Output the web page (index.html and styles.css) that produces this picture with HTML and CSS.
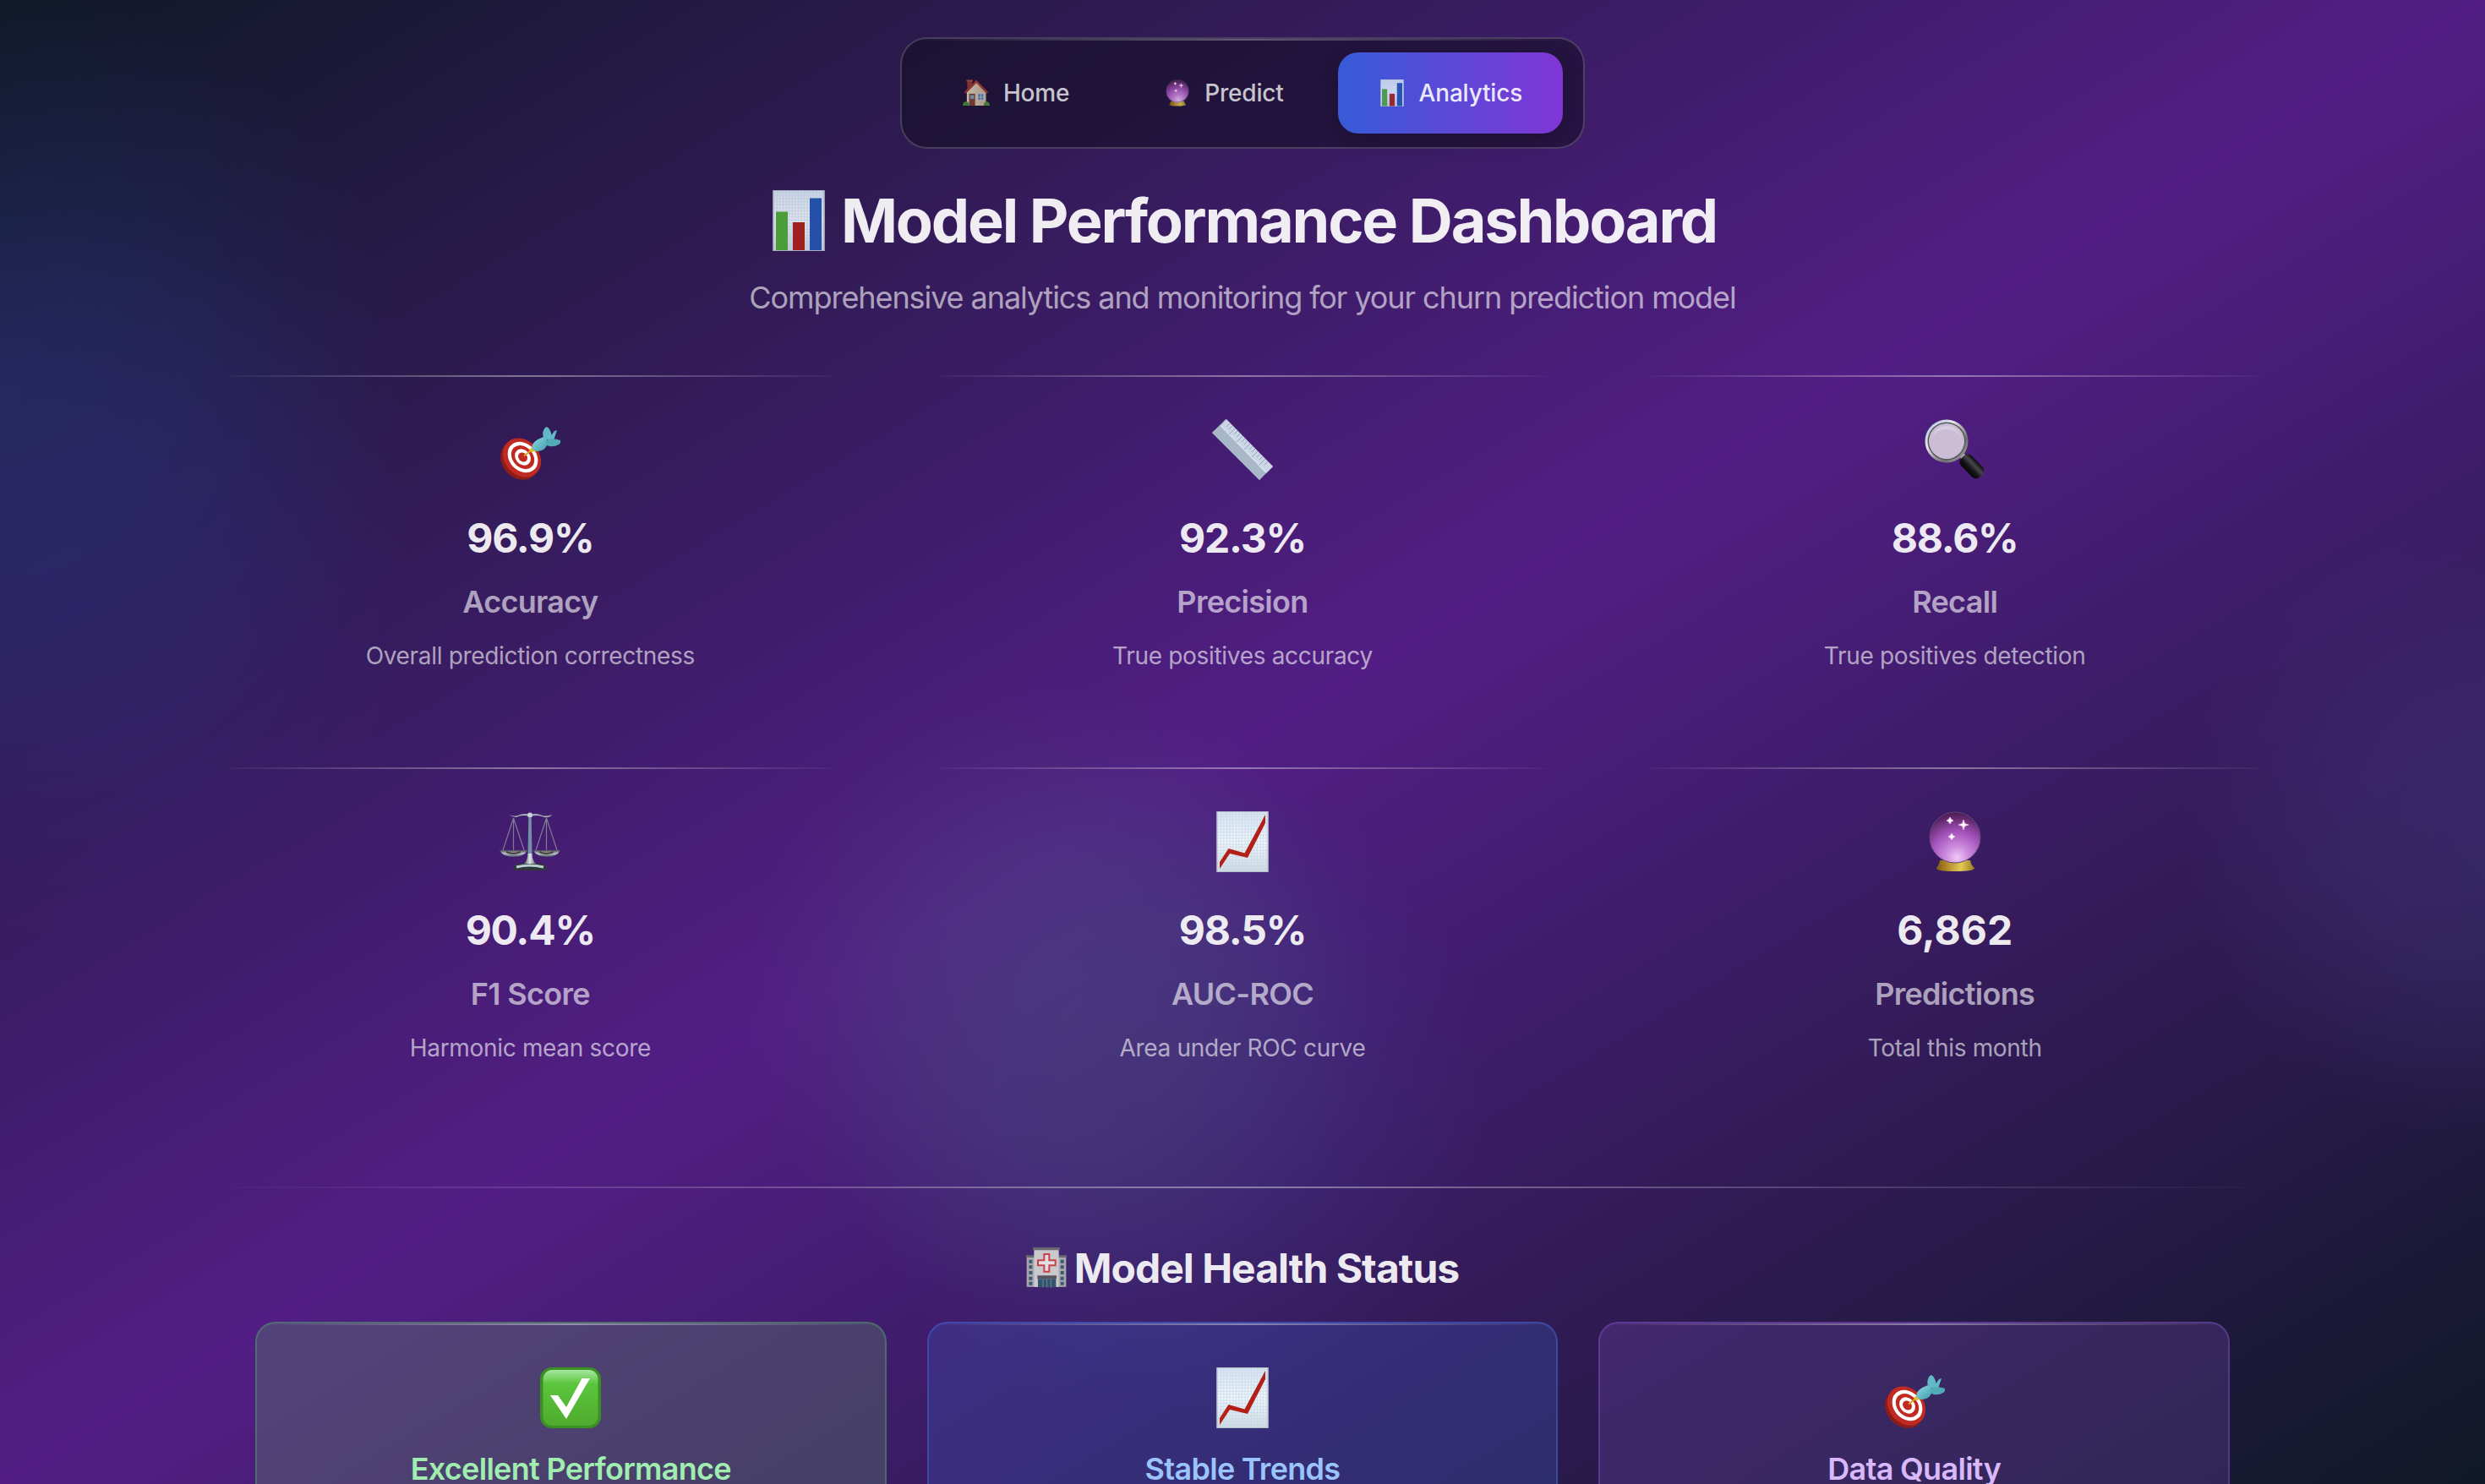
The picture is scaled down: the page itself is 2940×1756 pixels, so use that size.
FILE: index.html
```html
<!DOCTYPE html>
<html lang="en">
<head>
<meta charset="utf-8">
<title>Model Performance Dashboard</title>
<link rel="stylesheet" href="styles.css">
</head>
<body>
<svg class="sprite" aria-hidden="true">
  <defs>
    <linearGradient id="paper" x1="0" y1="0" x2="0" y2="1"><stop offset="0" stop-color="#dde2ee"/><stop offset=".5" stop-color="#f6f6f7"/><stop offset="1" stop-color="#d3d8dd"/></linearGradient>
    <linearGradient id="green" x1="0" y1="0" x2="0" y2="1"><stop offset="0" stop-color="#a5e8a0"/><stop offset=".25" stop-color="#5bc53d"/><stop offset="1" stop-color="#4fab2e"/></linearGradient>
    <linearGradient id="gold" x1="0" y1="0" x2="1" y2="0"><stop offset="0" stop-color="#7c5a13"/><stop offset=".3" stop-color="#b88b2b"/><stop offset=".65" stop-color="#e0cb55"/><stop offset="1" stop-color="#9a7a1e"/></linearGradient>
    <radialGradient id="orb" cx=".54" cy=".9" r=".9"><stop offset="0" stop-color="#f0c8f4"/><stop offset=".25" stop-color="#cd8cdf"/><stop offset=".58" stop-color="#a352bb"/><stop offset="1" stop-color="#4a1a4f"/></radialGradient>
    <linearGradient id="rim" x1="0" y1="0" x2="1" y2="1"><stop offset="0" stop-color="#9fc4ea"/><stop offset=".35" stop-color="#e6e6e6"/><stop offset=".7" stop-color="#6e6e70"/><stop offset="1" stop-color="#b5b5b0"/></linearGradient>
    <linearGradient id="grip" x1="0" y1="1" x2="0" y2="0"><stop offset="0" stop-color="#050505"/><stop offset=".35" stop-color="#151517"/><stop offset=".68" stop-color="#48484c"/><stop offset="1" stop-color="#0a0a0a"/></linearGradient>
    <linearGradient id="steel" x1="0" y1="0" x2="1" y2="0"><stop offset="0" stop-color="#4a5055"/><stop offset=".5" stop-color="#dfe8ea"/><stop offset="1" stop-color="#4f565c"/></linearGradient>
    <linearGradient id="pan" x1="0" y1="0" x2="0" y2="1"><stop offset="0" stop-color="#4b4b50"/><stop offset=".5" stop-color="#b9c6d0"/><stop offset="1" stop-color="#46505a"/></linearGradient>
    <linearGradient id="dart" x1="0" y1="0" x2="1" y2="1"><stop offset="0" stop-color="#8fdbe2"/><stop offset="1" stop-color="#3f9aab"/></linearGradient>
    <linearGradient id="wall" x1="0" y1="0" x2="1" y2="0"><stop offset="0" stop-color="#e2d3b8"/><stop offset="1" stop-color="#c3b398"/></linearGradient>
    <pattern id="grid" width="3.6" height="3.6" patternUnits="userSpaceOnUse"><path d="M3 0V3.6M0 3H3.6" stroke="#bcd8ee" stroke-width=".7" fill="none"/></pattern>
  </defs>
  <symbol id="i-target" viewBox="0 0 72 72">
    <ellipse cx="24" cy="48.500" rx="21" ry="25" transform="rotate(-42 24 48.500)" fill="#8e1c18"/>
    <ellipse cx="26.500" cy="45.500" rx="20.500" ry="25" transform="rotate(-42 26.500 45.500)" fill="#c02a22"/>
    <ellipse cx="27.500" cy="45" rx="16" ry="20" transform="rotate(-42 27.500 45)" fill="#fff"/>
    <ellipse cx="27.500" cy="45" rx="12" ry="15.500" transform="rotate(-42 27.500 45)" fill="#c02a22"/>
    <ellipse cx="27.500" cy="45" rx="8.500" ry="10.500" transform="rotate(-42 27.500 45)" fill="#fff"/>
    <ellipse cx="27.500" cy="45" rx="5" ry="6" transform="rotate(-42 27.500 45)" fill="#c02a22"/>
    <path d="M29 43.500l9-7" stroke="#d9a520" stroke-width="2"/><path d="M35 36l4-3 4 5-5 1z" fill="#e6c21f"/>
    <path d="M38 34q0-8 14-13l6 5q-3 12-13 12-5 0-7-4z" fill="url(#dart)"/>
    <path d="M53 24q-4-8 1-14 3-2 5 2 4 6 2 12zM57 25l8-11 3-1-4 12z" fill="#62b8c5"/>
    <path d="M54 26q8-5 18-1 1 3-2 5-7 4-14 1z" fill="#52aab8"/>
  </symbol>
  <symbol id="i-ruler" viewBox="0 0 72 72">
    <path d="M16 0L72 56 56 72 0 16z" fill="#93a3b9"/><path d="M10 8l7-8 55 56-8 8z" fill="#cbd7e6"/><path d="M0 16l10-9 54 56-8 9z" fill="#a9b8c9"/>
    <path d="M10 7.500L64 63" stroke="#dfe8f1" stroke-width="1.200"/>
    <path d="M21 5l-4 4m7-1l-4 4m7-1l-7 7m10-4l-4 4m7-1l-4 4m7-1l-7 7m10-4l-4 4m7-1l-4 4m7-1l-7 7m10-4l-4 4m7-1l-4 4m7-1l-7 7m10-4l-4 4m7-1l-4 4m7-1l-7 7m10-4l-4 4" stroke="#8494ac" stroke-width=".8"/>
  </symbol>
  <symbol id="i-search" viewBox="0 0 72 72">
    <path d="M41 44l5-4 6 6-5 5z" fill="#a5a5a5"/>
    <circle cx="26" cy="26" r="25.500" fill="url(#rim)"/><circle cx="26" cy="26" r="22.500" fill="#59595c"/><circle cx="26" cy="26" r="21" fill="#cbbdd6"/>
    <path d="M9 22q4-14 17-14t17 14q-5-10-17-10T9 22z" fill="#d8cce0"/>
    <rect x="40.500" y="47" width="31" height="17" rx="6" transform="rotate(46 55.500 55.500)" fill="url(#grip)"/>
  </symbol>
  <symbol id="i-scales" viewBox="0 0 72 72">
    <path d="M11 4q7 3 13 0 6-2 12 0 6-2 12 0 6 3 14 0-3 4-9 3-5-2-9-2-4 0-8 1-4-1-8-1t-8 2q-5 0-9-3z" fill="#a7b0b8"/>
    <circle cx="36" cy="4.500" r="3" fill="#c9d2d8"/>
    <path d="M16.500 8L4 46m12.500-38v38m0-38L29 46M55.500 8L43 46m12.500-38v38m0-38L68 46" stroke="#7f7b90" stroke-width="1.200" fill="none"/>
    <path d="M34.300 7h3.400l.8 45H33.500z" fill="#7390a6"/><path d="M33.500 50h5q0 9 5 12h-15q5-3 5-12z" fill="url(#steel)"/>
    <path d="M0 46h33q-4 8-16.500 8T0 46zM39.500 46H72q-4 8-16 8t-16.500-8z" fill="url(#pan)"/>
    <path d="M8 48q8 4 17 0M47 48q8 4 17 0" stroke="#4b403c" stroke-width="2" fill="none"/>
    <path d="M21 62h30l5 5q0 3-3 3H19q-3 0-3-3z" fill="#30363b"/><path d="M20 66q15-4 32 0" stroke="#b8d0cf" stroke-width="3" fill="none"/>
  </symbol>
  <symbol id="i-trend" viewBox="0 0 72 72">
    <path d="M5.500 0h61v72h-61z" fill="url(#paper)"/><path d="M5.500 0h61v72h-61z" fill="url(#grid)"/><path d="M6 .5h60v71H6z" stroke="#b4bcc8" fill="none"/>
    <path d="M9 60l10.500-16 19 5.500L63 4v10L42 55l-21-5L9 68z" fill="#b32018"/>
  </symbol>
  <symbol id="i-bars" viewBox="0 0 72 72">
    <path d="M5.500 0h61v72h-61z" fill="url(#paper)"/><path d="M5.500 0h61v72h-61z" fill="url(#grid)"/><path d="M6 .5h60v71H6z" stroke="#b4bcc8" fill="none"/>
    <path d="M9 25.500h14V71H9z" fill="#50a83a"/><path d="M29 38h14v33H29z" fill="#a8221c"/><path d="M49 9.500h14V71H49z" fill="#2355b0"/>
  </symbol>
  <symbol id="i-orb" viewBox="0 0 72 72">
    <path d="M18 58h36q1 6 5 9 0 4-23 4t-22-4q3-3 4-9z" fill="url(#gold)"/>
    <circle cx="36" cy="31" r="30" fill="url(#orb)" stroke="#5f4b78" stroke-width="1"/>
    <path d="M30 7l1.500 2.500L34 11l-2.500 1.500L30 15l-1.500-2.500L26 11l2.500-1.500zM46 10l1.500 4.500L52 16l-4.500 1.500L46 22l-1.500-4.500L40 16l4.500-1.500zM32 26l1.500 2.500L36 30l-2.500 1.500L32 34l-1.500-2.500L28 30l2.500-1.500z" fill="#fff" stroke="#f0b8ea" stroke-width=".8"/>
  </symbol>
  <symbol id="i-home" viewBox="0 0 72 72">
    <path d="M12 3h13v26H12z" fill="#93392c"/><path d="M10 1h17v5H10z" fill="#a64a3a"/>
    <path d="M11 33L37 8l25 26v36H11z" fill="url(#wall)"/><path d="M36 1l32 33-4 4L36 9 8 38l-4-4z" fill="#a0392d"/>
    <path d="M17 38h16v32H17z" fill="#7c4234"/><path d="M20 42h10v10H20z" fill="#7da2bd"/>
    <path d="M38 36h20v20H38z" fill="#c9c4c0"/><path d="M41 39h6v7h-6zM49 39h6v7h-6zM41 48h6v6h-6zM49 48h6v6h-6z" fill="#4d83bd"/>
    <path d="M0 70q0-11 9-11t8 11zM56 70q0-11 8-11t8 11z" fill="#4b8a35"/>
  </symbol>
  <symbol id="i-hospital" viewBox="0 0 72 72">
    <path d="M1 16h70v54H1z" fill="#a7a7ac"/><path d="M0 14h72v4H0z" fill="#69696f"/>
    <path d="M14 2h44v68H14z" fill="#c9c8cd"/><path d="M12 0h48v5H12z" fill="#68686e"/>
    <path d="M5 22h6v6H5zm0 10h6v6H5zm0 10h6v6H5zm0 10h6v6H5zm0 9h6v6H5zM61 22h6v6h-6zm0 10h6v6h-6zm0 10h6v6h-6zm0 10h6v6h-6zm0 9h6v6h-6z" fill="#3c5a76"/>
    <path d="M32 12h9v11h11v9H41v11h-9V32H21v-9h11z" fill="#e0dde3" stroke="#c9404a" stroke-width="3"/>
    <path d="M20 50h34v6H20z" fill="#55555b"/><path d="M21 56h32v15H21z" fill="#34536c"/><path d="M30 56v15M37 56v15M44 56v15" stroke="#6f8799" stroke-width="1.500"/>
  </symbol>
  <symbol id="i-check" viewBox="0 0 72 72">
    <rect width="72" height="72" rx="14" fill="#3c8f23"/><rect x="3.500" y="3" width="65" height="66" rx="11" fill="url(#green)"/>
    <path d="M12 33h9l10 14L49.500 13h9.500L31 61z" fill="#fff"/>
  </symbol>
</svg>

<div class="page">
  <nav class="nav">
    <a class="tab"><svg class="tab-icon"><use href="#i-home"/></svg><span>Home</span></a>
    <a class="tab"><svg class="tab-icon"><use href="#i-orb"/></svg><span>Predict</span></a>
    <a class="tab active"><svg class="tab-icon"><use href="#i-bars"/></svg><span>Analytics</span></a>
  </nav>

  <header class="header">
    <h1 class="title"><svg class="title-icon"><use href="#i-bars"/></svg><span>Model Performance Dashboard</span></h1>
    <p class="subtitle">Comprehensive analytics and monitoring for your churn prediction model</p>
  </header>

  <section class="metrics">
    <article class="metric"><svg class="icon"><use href="#i-target"/></svg><span class="value percent">96.9%</span><span class="label">Accuracy</span><span class="desc">Overall prediction correctness</span></article>
    <article class="metric"><svg class="icon"><use href="#i-ruler"/></svg><span class="value percent">92.3%</span><span class="label">Precision</span><span class="desc">True positives accuracy</span></article>
    <article class="metric"><svg class="icon"><use href="#i-search"/></svg><span class="value percent">88.6%</span><span class="label">Recall</span><span class="desc">True positives detection</span></article>
    <article class="metric"><svg class="icon"><use href="#i-scales"/></svg><span class="value percent">90.4%</span><span class="label">F1 Score</span><span class="desc">Harmonic mean score</span></article>
    <article class="metric"><svg class="icon"><use href="#i-trend"/></svg><span class="value percent">98.5%</span><span class="label">AUC-ROC</span><span class="desc">Area under ROC curve</span></article>
    <article class="metric"><svg class="icon"><use href="#i-orb"/></svg><span class="value">6,862</span><span class="label">Predictions</span><span class="desc">Total this month</span></article>
  </section>

  <section class="health">
    <h2 class="health-title"><svg class="health-icon"><use href="#i-hospital"/></svg><span>Model Health Status</span></h2>
    <div class="statuses">
      <article class="status good"><svg class="icon"><use href="#i-check"/></svg><span class="status-name">Excellent Performance</span></article>
      <article class="status stable"><svg class="icon"><use href="#i-trend"/></svg><span class="status-name">Stable Trends</span></article>
      <article class="status quality"><svg class="icon"><use href="#i-target"/></svg><span class="status-name">Data Quality</span></article>
    </div>
  </section>
</div>
</body>
</html>
```
FILE: styles.css
```css
* { box-sizing: border-box; }

html { height: 100%; overflow: hidden; }

body {
  margin: 0;
  height: 100vh;
  overflow: hidden;
  color: rgba(255, 255, 255, .92);
  font-family: Inter, "Liberation Sans", sans-serif;
  background:
    radial-gradient(circle at 1250px 1180px, rgba(76, 98, 118, .26) 0, rgba(76, 98, 118, .2) 170px, rgba(72, 96, 120, 0) 370px),
    radial-gradient(circle at 1370px 1280px, rgba(62, 74, 150, .24) 0, rgba(62, 74, 150, .2) 190px, rgba(62, 74, 150, 0) 390px),
    radial-gradient(circle at 2950px 980px, rgba(68, 54, 132, .46) 0, rgba(68, 54, 130, .34) 170px, rgba(62, 52, 130, 0) 370px),
    radial-gradient(circle at 60px 680px, rgba(48, 42, 120, .42) 0, rgba(48, 42, 120, .32) 210px, rgba(48, 42, 120, 0) 430px),
    radial-gradient(circle at 0 460px, rgba(30, 58, 116, .4) 0, rgba(30, 58, 116, .28) 210px, rgba(30, 58, 116, 0) 480px),
    linear-gradient(to bottom right, #101827 0%, #521e85 50%, #101827 100%);
}

.sprite { position: absolute; width: 0; height: 0; }

.page {
  display: flex;
  flex-direction: column;
  align-items: center;
  width: 2464px;
  height: 100%;
  margin: 0 auto;
  padding-top: 44px;
}

.nav {
  display: flex;
  gap: 16px;
  padding: 16px 24px;
  border: 2px solid rgba(255, 255, 255, .19);
  border-radius: 32px;
  background:
    linear-gradient(90deg, transparent, rgba(255, 255, 255, .3), transparent) top / 100% 2px no-repeat padding-box,
    rgba(14, 12, 28, .5);
}

.tab {
  display: flex;
  align-items: center;
  gap: 16px;
  height: 96px;
  padding: 0 48px;
  border-radius: 24px;
  font-size: 28px;
  font-weight: 500;
  letter-spacing: -.2px;
  color: rgba(255, 255, 255, .75);
}
.tab.active {
  color: rgba(255, 255, 255, .9);
  background: linear-gradient(90deg, #365bd8, #8036d6);
  box-shadow: 0 8px 24px rgba(0, 0, 0, .22);
}
.tab-icon { width: 32px; height: 32px; opacity: .85; }

.header { display: flex; flex-direction: column; align-items: center; }

.title {
  display: flex;
  align-items: center;
  gap: 14px;
  margin: 44px 0 0;
  height: 81px;
  font-size: 72px;
  font-weight: 700;
  letter-spacing: -2.2px;
}
.title-icon { width: 72px; height: 72px; opacity: .92; }

.subtitle {
  margin: 23px 0 64px;
  font-size: 36px;
  line-height: 56px;
  letter-spacing: -1.08px;
  color: rgba(255, 255, 255, .6);
}

.metrics {
  display: grid;
  grid-template-columns: repeat(3, 1fr);
  gap: 64px;
  width: 100%;
}
.metric {
  display: flex;
  flex-direction: column;
  align-items: center;
  height: 400px;
  padding-top: 52px;
  border-radius: 40px;
  background: linear-gradient(90deg, transparent, rgba(255, 255, 255, .4), transparent) top / 100% 2px no-repeat;
}
.icon { width: 72px; height: 72px; flex: none; }
.value { margin-top: 40px; font-size: 48px; font-weight: 700; line-height: 58px; }
.value.percent { letter-spacing: -1.2px; }
.label { margin-top: 24px; font-size: 36px; font-weight: 600; line-height: 44px; letter-spacing: -.7px; color: rgba(255, 255, 255, .6); }
.desc { margin-top: 22px; font-size: 28px; line-height: 40px; letter-spacing: -.32px; color: rgba(255, 255, 255, .6); }

.health {
  flex: 1;
  display: flex;
  flex-direction: column;
  width: 100%;
  min-height: 0;
  margin-top: 96px;
  padding: 68px 64px 0;
  overflow: hidden;
  border-radius: 40px 40px 0 0;
  background: linear-gradient(90deg, transparent, rgba(255, 255, 255, .4), transparent) top / 100% 2px no-repeat;
}
.health-title {
  display: flex;
  flex: none;
  align-items: center;
  justify-content: center;
  gap: 9px;
  margin: 0 0 36px;
  height: 56px;
  font-size: 48px;
  font-weight: 700;
  letter-spacing: -1px;
}
.health-icon { width: 48px; height: 48px; }

.statuses { flex: 1; display: grid; grid-template-columns: repeat(3, 1fr); gap: 48px; }
.status {
  --tint: rgba(255, 255, 255, .1);
  display: flex;
  flex-direction: column;
  align-items: center;
  padding-top: 52px;
  border: 2px solid;
  border-bottom: 0;
  border-radius: 24px 24px 0 0;
  background:
    linear-gradient(90deg, transparent, rgba(255, 255, 255, .4), transparent) top / 100% 2px no-repeat padding-box,
    var(--tint);
}
.status-name { margin-top: 26px; font-size: 36px; font-weight: 600; line-height: 38px; padding-top: 3px; letter-spacing: -.7px; white-space: nowrap; }
.good { --tint: rgba(88, 130, 106, .36); border-color: rgba(80, 150, 110, .5); color: #a0edb0; }
.stable { --tint: rgba(59, 90, 190, .3); border-color: rgba(70, 100, 210, .5); color: #9ac4fb; }
.quality { --tint: rgba(130, 85, 200, .24); border-color: rgba(150, 90, 220, .35); color: #d9b8fb; }
```
